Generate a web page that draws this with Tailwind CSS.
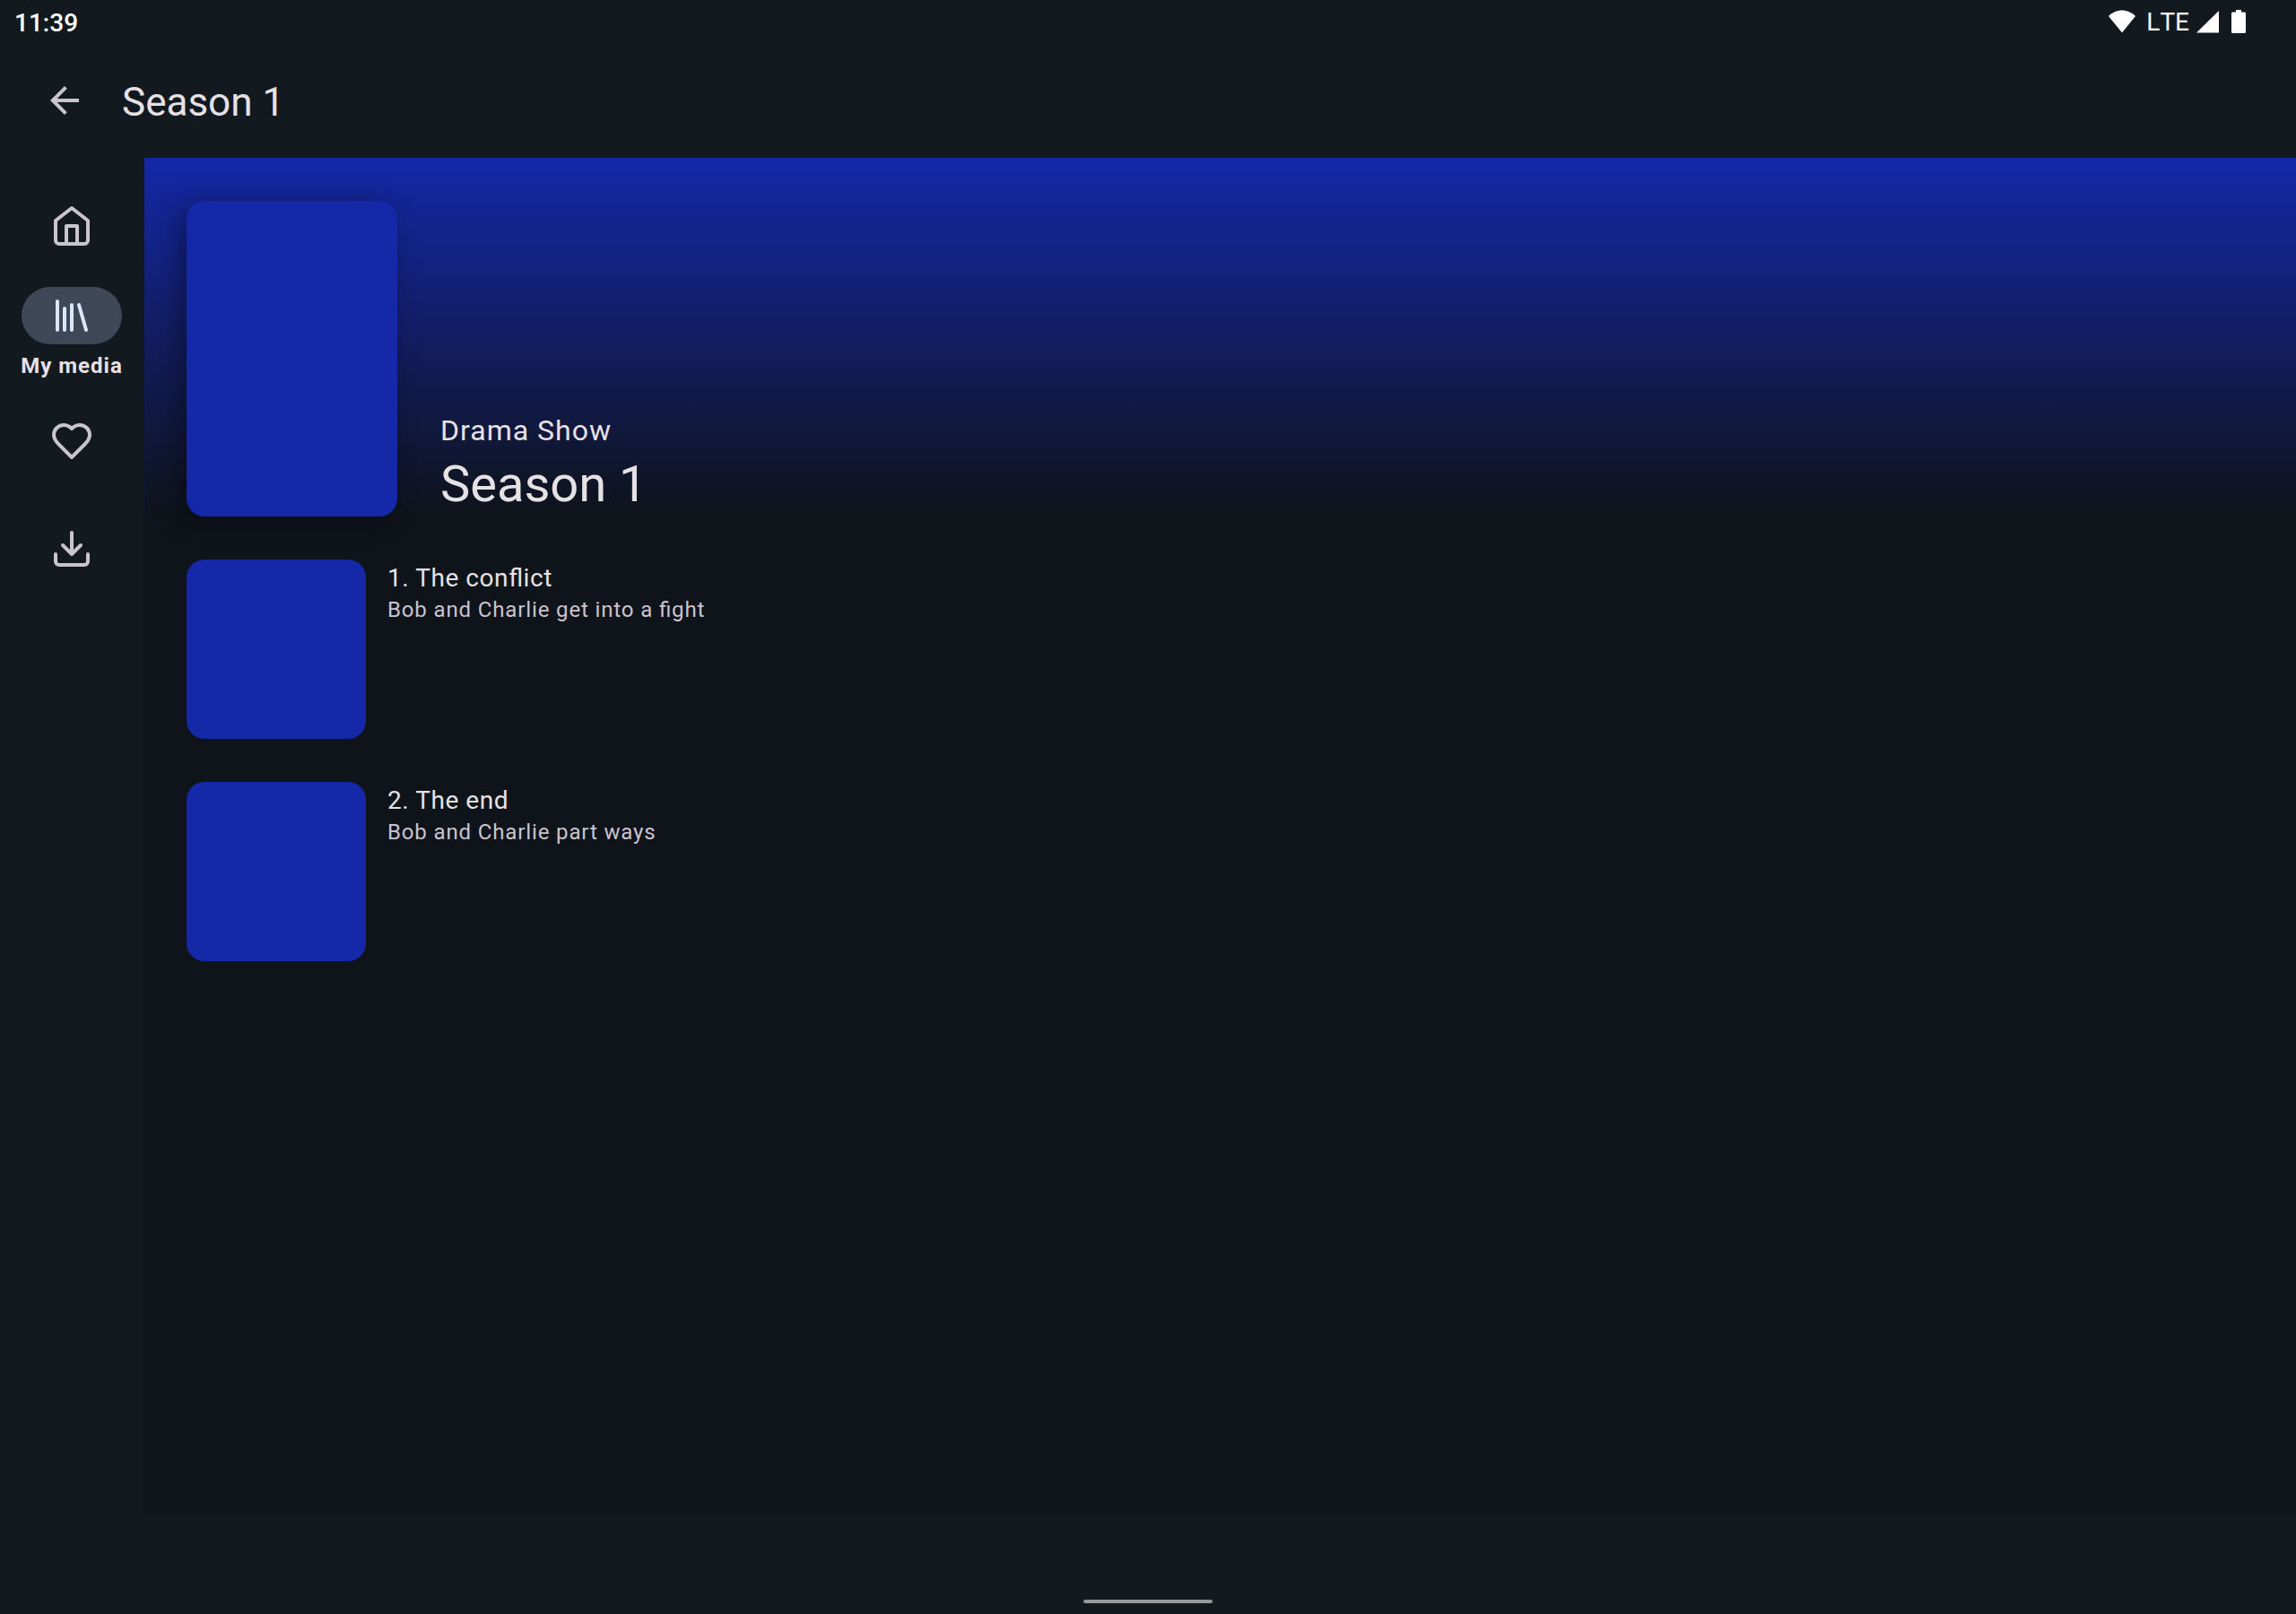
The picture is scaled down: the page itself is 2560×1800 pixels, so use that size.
<!DOCTYPE html>
<html lang="en">
<head>
<meta charset="utf-8">
<meta name="viewport" content="width=device-width, initial-scale=1">
<title>Season 1</title>
<script src="https://cdn.jsdelivr.net/npm/@tailwindcss/browser@4"></script>
</head>
<body class="flex min-h-screen flex-col bg-[#121a20] font-[Roboto,sans-serif] text-[#e6e1e5] [font-feature-settings:'liga']">
  <!-- Status bar -->
  <div class="flex h-12 items-center justify-between pr-14 pl-4 text-[28px] text-white">
    <time class="pt-1 font-medium">11:39</time>
    <div class="flex items-center">
      <svg class="mr-3 h-[26px] w-[30px]" viewBox="0 0 30 26" fill="currentColor" aria-label="Wi-Fi"><path d="M15 25.5 0 7C4 3 9.500 0.500 15 0.500S26 3 30 7z"/></svg>
      <span class="mr-2 pt-0.5 [font-kerning:none]">LTE</span>
      <svg class="mr-[14px] h-[26px] w-[25px]" viewBox="0 0 25 26" fill="currentColor" aria-label="Signal"><path d="M0 25.500 25 1v24.500z"/></svg>
      <svg class="h-[26px] w-4" viewBox="0 0 16 26" fill="currentColor" aria-label="Battery"><path d="M5 0h6v2.500h3.500A1.500 1.500 0 0 1 16 4v20.500a1.500 1.500 0 0 1-1.500 1.500h-13A1.500 1.500 0 0 1 0 24.500V4a1.500 1.500 0 0 1 1.500-1.500H5z"/></svg>
    </div>
  </div>

  <!-- App bar -->
  <header class="flex h-32 items-center gap-4 px-6">
    <button type="button" aria-label="Back" class="grid size-24 place-items-center text-[#cac4d0]">
      <svg class="size-12" viewBox="0 0 24 24" fill="currentColor"><path d="M20 11H7.830l5.590-5.590L12 4l-8 8 8 8 1.410-1.410L7.830 13H20z"/></svg>
    </button>
    <h1 class="pt-1 text-[44px] leading-14">Season 1</h1>
  </header>

  <div class="flex flex-1">
    <!-- Navigation rail -->
    <nav class="flex w-40 shrink-0 flex-col items-center gap-2 pt-5 text-[#cac4d0]">
      <a href="#home" aria-label="Home" class="grid h-28 w-full place-items-center">
        <svg class="size-12" viewBox="0 0 24 24" fill="none" stroke="currentColor" stroke-width="2" stroke-linecap="round" stroke-linejoin="round"><path d="m3 9 9-7 9 7v11a2 2 0 0 1-2 2H5a2 2 0 0 1-2-2z"/><path d="M9 22V12h6v10"/></svg>
      </a>
      <a href="#media" aria-current="page" class="flex h-28 w-full flex-col items-center gap-2 pt-1">
        <span class="grid h-16 w-28 place-items-center rounded-full bg-[#3e4857] text-[#d9e6fb]">
          <svg class="size-12" viewBox="0 0 24 24" fill="none" stroke="currentColor" stroke-width="2" stroke-linecap="round" stroke-linejoin="round"><path d="m16 6 4 14M12 6v14M8 8v12M4 4v16"/></svg>
        </span>
        <span class="text-[24px] leading-8 font-bold tracking-[1px] whitespace-nowrap text-[#e6e1e5]">My media</span>
      </a>
      <a href="#favorites" aria-label="Favorites" class="grid h-28 w-full place-items-center">
        <svg class="size-12" viewBox="0 0 24 24" fill="none" stroke="currentColor" stroke-width="2" stroke-linecap="round" stroke-linejoin="round"><path d="M19 14c1.490-1.460 3-3.210 3-5.500A5.500 5.500 0 0 0 16.500 3c-1.760 0-3 .5-4.500 2-1.500-1.500-2.740-2-4.500-2A5.500 5.500 0 0 0 2 8.500c0 2.300 1.500 4.050 3 5.500l7 7Z"/></svg>
      </a>
      <a href="#downloads" aria-label="Downloads" class="grid h-28 w-full place-items-center">
        <svg class="size-12" viewBox="0 0 24 24" fill="none" stroke="currentColor" stroke-width="2" stroke-linecap="round" stroke-linejoin="round"><path d="M21 15v4a2 2 0 0 1-2 2H5a2 2 0 0 1-2-2v-4"/><path d="m7 10 5 5 5-5M12 15V3"/></svg>
      </a>
    </nav>

    <main class="min-w-0 flex-1 bg-[#0f131a]">
      <section class="flex items-end gap-12 border-l border-[#0f1738] bg-linear-to-b/srgb from-[#1428a8] to-[#0f131a] pt-12 pr-12 pl-[47px]">
        <div class="h-88 w-[235px] shrink-0 rounded-[20px] bg-[#1428a8] shadow-[-8px_4px_28px_rgb(0_0_0/0.35)]"></div>
        <div>
          <p class="text-[32px] leading-12 tracking-[1px]">Drama Show</p>
          <h2 class="text-[56px] leading-18">Season 1</h2>
        </div>
      </section>

      <ul class="flex flex-col gap-12 p-12">
        <li>
          <a href="#episode-1" class="flex gap-6">
            <span class="size-50 shrink-0 rounded-[20px] bg-[#1428a8]"></span>
            <span class="flex flex-col">
              <span class="text-[28px] leading-[42px] tracking-[0.02em]">1. The conflict</span>
              <span class="text-[24px] leading-7 tracking-[0.036em] text-[#cac4d0]">Bob and Charlie get into a fight</span>
            </span>
          </a>
        </li>
        <li>
          <a href="#episode-2" class="flex gap-6">
            <span class="size-50 shrink-0 rounded-[20px] bg-[#1428a8]"></span>
            <span class="flex flex-col">
              <span class="text-[28px] leading-[42px] tracking-[0.02em]">2. The end</span>
              <span class="text-[24px] leading-7 tracking-[0.036em] text-[#cac4d0]">Bob and Charlie part ways</span>
            </span>
          </a>
        </li>
      </ul>
    </main>
  </div>

  <!-- Gesture handle -->
  <footer class="flex h-28 items-end justify-center pb-3">
    <div class="h-1 w-36 rounded-full bg-[#959b9d]"></div>
  </footer>
</body>
</html>
